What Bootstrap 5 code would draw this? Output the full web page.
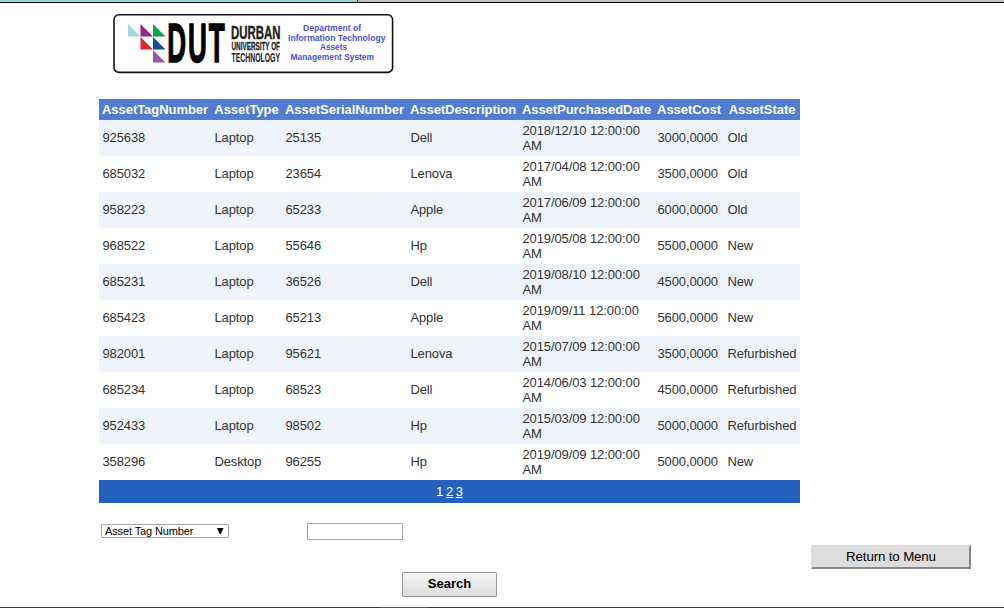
<!DOCTYPE html>
<html lang="en">
<head>
<meta charset="utf-8">
<title>Assets Management System</title>
<link href="https://cdn.jsdelivr.net/npm/bootstrap@5.3.0/dist/css/bootstrap.min.css" rel="stylesheet">
<style>
body{height:608px;font-family:"Liberation Sans",Arial,sans-serif;font-size:13px;line-height:15px;color:#333;background:#fff}
.strip{height:3px;background:#c0c0c0;border-bottom:1px solid #000}
.strip-active{width:358px;height:2px;background:#96dbdc;border-right:1px solid #000}
.logo{margin:11px 0 0 113px;width:281px;height:60px}
.assets{width:701px;margin:25px 0 0 99px;table-layout:fixed;border-collapse:collapse;color:#333}
.assets th,.assets td{padding:0 0 0 3px;vertical-align:middle}
.assets thead th{height:21px;background:#507cd1;color:#fff;text-align:center;white-space:nowrap;padding:0;letter-spacing:-.05px}
.assets tbody tr{height:36px}
.assets tbody td{padding-bottom:1px;padding-left:3.4px;letter-spacing:-.1px}
.assets tbody td:nth-child(5){padding-right:12px}
.assets tbody tr:nth-child(odd){background:#eff3fb}
.assets tfoot td{height:23px;background:#2461bf;color:#fff;text-align:center;padding:0}
.assets tfoot a{color:#fff;margin-left:2.6px}
.filters{margin:20px 0 0 101px;height:17px;gap:78px}
.pick{width:128px;height:14px;margin-top:1px;border:1px solid #a9a9a9;border-radius:1px;background:#fff;color:#000;font-size:11px;letter-spacing:-.12px;line-height:12px;padding:0 4px 0 3px}
.term{width:96px;height:17px;border:1px solid #a9a9a9;padding:0 2px}
.menu-btn{width:160px;height:24px;margin:5px 33px 0 0;padding:0;border:2px solid;border-color:#ddd #868686 #868686 #ddd;background:#ddd;color:#000;font-size:13.33px;letter-spacing:-.15px;line-height:18px}
.search-btn{width:95px;height:25px;margin:3px 0 0 402px;padding:0 0 1px;border:1px solid #999;border-radius:1px;background:linear-gradient(#f6f6f6,#dcdcdc);color:#000;font-size:13px;line-height:20px}
.taskbar{height:1px;background:#0d4778}
.taskbar div{width:48px;height:1px;margin-left:380px;background:#15639f}
</style>
</head>
<body class="d-flex flex-column overflow-hidden">
<div class="strip flex-shrink-0"><div class="strip-active"></div></div>
<header class="logo flex-shrink-0">
<svg class="d-block" width="281" height="60" viewBox="113 14 281 60" font-family="Liberation Sans, Arial, sans-serif" font-weight="bold">
<rect x="114" y="14.8" width="278.6" height="57.6" rx="5" fill="#fff" stroke="#151515" stroke-width="1.6"/>
<path fill="#9edbdc" d="M128 24v12.5h12.5z"/>
<path fill="#93278f" d="M140.5 24v12.5H153z"/>
<path fill="#00a651" d="M153 24v12.5h12.5z"/>
<path fill="#e5252b" d="M140.5 37v12.5H153z"/>
<path fill="#0f4fa5" d="M153 37v12.5h12.5z"/>
<path fill="#9b5aa8" d="M153 50v12.5h12.5z"/>
<text transform="translate(167.3 62) scale(.475 1)" font-size="55" letter-spacing="4" fill="#000" stroke="#000" stroke-width="1.4">DUT</text>
<g fill="#222" stroke="#222">
<text x="231" y="39" font-size="17.6" textLength="49.5" lengthAdjust="spacingAndGlyphs" stroke-width=".4">DURBAN</text>
<text x="231.5" y="50" font-size="10.8" textLength="48.5" lengthAdjust="spacingAndGlyphs" stroke-width=".3">UNIVERSITY OF</text>
<text x="231.5" y="62" font-size="12.5" textLength="48.5" lengthAdjust="spacingAndGlyphs" stroke-width=".1">TECHNOLOGY</text>
</g>
<g fill="#4b4fe0" font-size="8.2">
<text x="303" y="31" textLength="58" lengthAdjust="spacingAndGlyphs">Department of</text>
<text x="288" y="40.5" textLength="97.5" lengthAdjust="spacingAndGlyphs">Information Technology</text>
<text x="320" y="50" textLength="27" lengthAdjust="spacingAndGlyphs">Assets</text>
<text x="290.5" y="59.5" textLength="83.5" lengthAdjust="spacingAndGlyphs">Management System</text>
</g>
</svg>
</header>
<table class="assets flex-shrink-0">
<colgroup><col style="width:112px"><col style="width:71px"><col style="width:125px"><col style="width:112px"><col style="width:135px"><col style="width:70px"><col style="width:76px"></colgroup>
<thead><tr><th>AssetTagNumber</th><th>AssetType</th><th>AssetSerialNumber</th><th>AssetDescription</th><th>AssetPurchasedDate</th><th>AssetCost</th><th>AssetState</th></tr></thead>
<tbody>
<tr><td>925638</td><td>Laptop</td><td>25135</td><td>Dell</td><td>2018/12/10 12:00:00 AM</td><td>3000,0000</td><td>Old</td></tr>
<tr><td>685032</td><td>Laptop</td><td>23654</td><td>Lenova</td><td>2017/04/08 12:00:00 AM</td><td>3500,0000</td><td>Old</td></tr>
<tr><td>958223</td><td>Laptop</td><td>65233</td><td>Apple</td><td>2017/06/09 12:00:00 AM</td><td>6000,0000</td><td>Old</td></tr>
<tr><td>968522</td><td>Laptop</td><td>55646</td><td>Hp</td><td>2019/05/08 12:00:00 AM</td><td>5500,0000</td><td>New</td></tr>
<tr><td>685231</td><td>Laptop</td><td>36526</td><td>Dell</td><td>2019/08/10 12:00:00 AM</td><td>4500,0000</td><td>New</td></tr>
<tr><td>685423</td><td>Laptop</td><td>65213</td><td>Apple</td><td>2019/09/11 12:00:00 AM</td><td>5600,0000</td><td>New</td></tr>
<tr><td>982001</td><td>Laptop</td><td>95621</td><td>Lenova</td><td>2015/07/09 12:00:00 AM</td><td>3500,0000</td><td>Refurbished</td></tr>
<tr><td>685234</td><td>Laptop</td><td>68523</td><td>Dell</td><td>2014/06/03 12:00:00 AM</td><td>4500,0000</td><td>Refurbished</td></tr>
<tr><td>952433</td><td>Laptop</td><td>98502</td><td>Hp</td><td>2015/03/09 12:00:00 AM</td><td>5000,0000</td><td>Refurbished</td></tr>
<tr><td>358296</td><td>Desktop</td><td>96255</td><td>Hp</td><td>2019/09/09 12:00:00 AM</td><td>5000,0000</td><td>New</td></tr>
</tbody>
<tfoot><tr><td colspan="7">1<a href="#">2</a><a href="#">3</a></td></tr></tfoot>
</table>
<div class="filters d-flex flex-shrink-0">
<div class="pick d-flex align-items-center justify-content-between" role="combobox"><span>Asset Tag Number</span><svg width="8" height="7"><path d="M1 0h6.5L4.7 6H3.8z"/></svg></div>
<input class="term" type="text" aria-label="Search term">
</div>
<button class="menu-btn align-self-end flex-shrink-0" type="button">Return to Menu</button>
<button class="search-btn fw-bold flex-shrink-0" type="button">Search</button>
<div class="taskbar mt-auto flex-shrink-0"><div></div></div>
<script src="https://cdn.jsdelivr.net/npm/bootstrap@5.3.0/dist/js/bootstrap.bundle.min.js"></script>
</body>
</html>
